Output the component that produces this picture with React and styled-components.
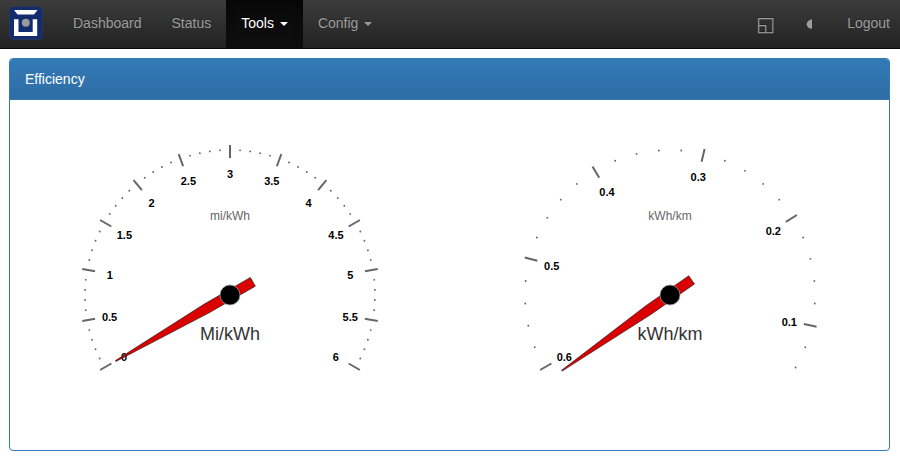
import React from "react";
import styled, { createGlobalStyle } from "styled-components";

const GlobalStyle = createGlobalStyle`
  *, *::before, *::after { box-sizing: border-box; }
  body {
    margin: 0;
    background: #fff;
    color: #333;
    font: 14px/20px "Liberation Sans", Arial, sans-serif;
    overflow: hidden;
  }
`;

const Navbar = styled.nav`
  display: flex;
  height: 49px;
  background: linear-gradient(#3c3c3c, #222);
  border-bottom: 1px solid #080808;
`;

const Brand = styled.a`
  display: block;
  margin: 6px 0 0 9px;
  width: 34px;
  height: 34px;
`;

const NavList = styled.div`
  display: flex;
  margin-left: ${(p) => (p.$end ? "auto" : "15px")};
`;

const NavLink = styled.a`
  display: flex;
  align-items: center;
  height: 48px;
  padding: 0 15px 2px;
  color: ${(p) => (p.$active ? "#fff" : "#9d9d9d")};
  text-shadow: 0 -1px 0 rgba(0, 0, 0, 0.25);
  background: ${(p) => (p.$active ? "linear-gradient(#080808, #0f0f0f)" : "none")};
  box-shadow: ${(p) => (p.$active ? "inset 0 3px 9px rgba(0, 0, 0, 0.25)" : "none")};
`;

const LastLink = styled(NavLink)`
  padding-right: 10px;
`;

const WindowSymbol = styled.span`
  display: block;
  width: 20px;
  margin-top: 2px;
  font: 20px/20px "DejaVu Sans", sans-serif;
`;

const HalfMoon = styled.svg`
  display: block;
  width: 11px;
  height: 10px;
  margin-top: 2px;
`;

const Caret = styled.span`
  margin: 2px 0 0 6px;
  border-top: 4px solid currentColor;
  border-left: 4px solid transparent;
  border-right: 4px solid transparent;
`;

const Panel = styled.section`
  margin: 9px 10px 0 9px;
  height: 393px;
  border: 1px solid #337ab7;
  border-radius: 4px;
  box-shadow: 0 1px 2px rgba(0, 0, 0, 0.05);
`;

const PanelHeading = styled.header`
  height: 41px;
  padding: 10px 15px;
  color: #fff;
  background: linear-gradient(#337ab7, #2e6da4);
  border-bottom: 1px solid #337ab7;
  border-radius: 3px 3px 0 0;
`;

const Gauges = styled.div`
  display: grid;
  grid-template-columns: 440px 439px;
`;

const Dial = styled.svg`
  display: block;
`;

const TickLabel = styled.text`
  font-size: 11px;
  font-weight: bold;
  fill: #000;
  text-anchor: middle;
`;

const UnitLabel = styled.text`
  font-size: 12px;
  fill: #666;
  text-anchor: middle;
`;

const DialTitle = styled.text`
  font-size: 18px;
  fill: #333;
  text-anchor: middle;
`;

const CX = 220;
const CY = 195;
const polar = (r, deg) => {
  const a = (deg * Math.PI) / 180;
  return [CX + r * Math.sin(a), CY - r * Math.cos(a)];
};

function Tick({ angle }) {
  const [x1, y1] = polar(137, angle);
  const [x2, y2] = polar(150, angle);
  return <line x1={x1} y1={y1} x2={x2} y2={y2} stroke="#666" strokeWidth="2" />;
}

function Dot({ angle }) {
  const [x, y] = polar(145, angle);
  return <circle cx={x} cy={y} r=".95" fill="#666" />;
}

function Gauge({ labels, steps, unit, title, needle }) {
  const angles = Array.from({ length: steps + 1 }, (_, i) => -120 + (240 * i) / steps);
  return (
    <Dial width="440" height="350" viewBox="0 0 440 350">
      {angles.map((a, i) => (i % 5 === 0 ? <Tick key={i} angle={a} /> : <Dot key={i} angle={a} />))}
      {labels.map(([text, x, y]) => (
        <TickLabel key={text} x={x} y={y}>{text}</TickLabel>
      ))}
      <UnitLabel x={CX} y={120}>{unit}</UnitLabel>
      <DialTitle x={CX} y={240}>{title}</DialTitle>
      <g transform={`translate(${CX} ${CY}) rotate(${needle})`}>
        <path
          d="M-5 26.4L-5 -26.4L-.5 -132L.5 -132L5 -26.4L5 26.4Z"
          fill="#da0000"
          stroke="#222"
          strokeWidth=".6"
        />
      </g>
      <circle cx={CX} cy={CY} r="10" fill="#000" stroke="#999" strokeWidth=".8" />
    </Dial>
  );
}

const MILES = [
  ["0", 114, 261], ["0.5", 99.6, 221], ["1", 99.7, 179], ["1.5", 114.4, 139],
  ["2", 141.5, 107], ["2.5", 178.4, 85], ["3", 220, 78], ["3.5", 261.8, 85],
  ["4", 298.5, 107], ["4.5", 326, 139], ["5", 340.2, 179], ["5.5", 340.2, 221],
  ["6", 325.7, 261],
];

const KILOMETRES = [
  ["0.6", 114.3, 261], ["0.5", 101.7, 170], ["0.4", 157, 96],
  ["0.3", 248.2, 81], ["0.2", 323.3, 135], ["0.1", 339.3, 226],
];

function Logo() {
  return (
    <svg width="34" height="34" viewBox="0 0 34 34">
      <rect x=".5" y=".8" width="32.7" height="32.7" rx="4" fill="#132c6d" stroke="#26385f" strokeWidth=".8" />
      <path d="M5 4H28.5L25 8.5H8.5Z" fill="#fff" />
      <path d="M5 13.2H9.5V26H23.7V13.2H28.2V30H5Z" fill="#fff" />
      <circle cx="16.8" cy="16.8" r="4" fill="#999" />
    </svg>
  );
}

export default function App() {
  return (
    <>
      <GlobalStyle />
      <Navbar>
        <Brand><Logo /></Brand>
        <NavList>
          <NavLink>Dashboard</NavLink>
          <NavLink>Status</NavLink>
          <NavLink $active>Tools<Caret /></NavLink>
          <NavLink>Config<Caret /></NavLink>
        </NavList>
        <NavList $end>
          <NavLink><WindowSymbol>◱</WindowSymbol></NavLink>
          <NavLink>
            <HalfMoon viewBox="0 0 11 10">
              <path d="M6 .6A5.3 4.6 0 0 0 6 9.8Z" fill="#9d9d9d" />
            </HalfMoon>
          </NavLink>
          <LastLink>Logout</LastLink>
        </NavList>
      </Navbar>
      <Panel>
        <PanelHeading>Efficiency</PanelHeading>
        <Gauges>
          <Gauge labels={MILES} steps={60} unit="mi/kWh" title="Mi/kWh" needle={-120} />
          <Gauge labels={KILOMETRES} steps={27} unit="kWh/km" title="kWh/km" needle={-125} />
        </Gauges>
      </Panel>
    </>
  );
}
